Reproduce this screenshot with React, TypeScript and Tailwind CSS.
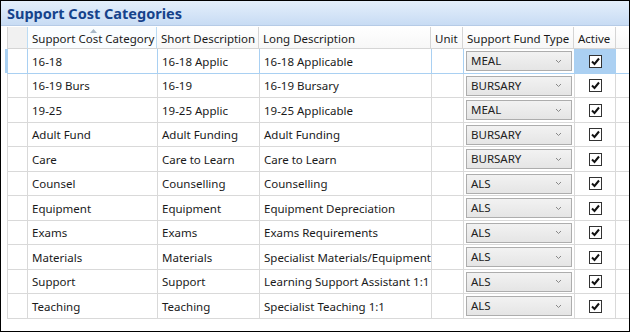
import React from 'react';

type Row = { cat: string; short: string; long: string; fund: string };

const rows: Row[] = [
  { cat: '16-18', short: '16-18 Applic', long: '16-18 Applicable', fund: 'MEAL' },
  { cat: '16-19 Burs', short: '16-19', long: '16-19 Bursary', fund: 'BURSARY' },
  { cat: '19-25', short: '19-25 Applic', long: '19-25 Applicable', fund: 'MEAL' },
  { cat: 'Adult Fund', short: 'Adult Funding', long: 'Adult Funding', fund: 'BURSARY' },
  { cat: 'Care', short: 'Care to Learn', long: 'Care to Learn', fund: 'BURSARY' },
  { cat: 'Counsel', short: 'Counselling', long: 'Counselling', fund: 'ALS' },
  { cat: 'Equipment', short: 'Equipment', long: 'Equipment Depreciation', fund: 'ALS' },
  { cat: 'Exams', short: 'Exams', long: 'Exams Requirements', fund: 'ALS' },
  { cat: 'Materials', short: 'Materials', long: 'Specialist Materials/Equipment', fund: 'ALS' },
  { cat: 'Support', short: 'Support', long: 'Learning Support Assistant 1:1', fund: 'ALS' },
  { cat: 'Teaching', short: 'Teaching', long: 'Specialist Teaching 1:1', fund: 'ALS' },
];

const font = { fontFamily: '"Noto Sans", "Open Sans", sans-serif' };

const Check = () => (
  <div className="w-[13px] h-[13px] border border-[#333] bg-white flex items-center justify-center">
    <svg width="9" height="9" viewBox="0 0 9 9">
      <path d="M1 4.5 L3.5 7 L8 1.5" fill="none" stroke="#111" strokeWidth="2" />
    </svg>
  </div>
);

const Dropdown = ({ value }: { value: string }) => (
  <div className="w-[106px] h-[20px] border border-[#adadad] bg-gradient-to-b from-[#f2f2f2] to-[#e5e5e5] flex items-center justify-between pl-[4px] pr-[9px] text-[#222]">
    <span>{value}</span>
    <svg width="7" height="5" viewBox="0 0 7 5">
      <path d="M1 1 L3.5 3.5 L6 1" fill="none" stroke="#888" strokeWidth="1" />
    </svg>
  </div>
);

const App: React.FC = () => {
  return (
    <div className="w-[630px] h-[334px] bg-white text-[11.5px] text-[#1a1a1a] whitespace-nowrap" style={font}>
      <div className="h-[332px] border border-black flex flex-col overflow-hidden">
        {/* title bar */}
        <div className="h-[25px] shrink-0 bg-gradient-to-b from-[#e4effb] to-[#c8dcf4] border-b border-[#b6cbe6] flex items-center pl-[6px] pt-[1px]">
          <span className="text-[14.5px] font-bold text-[#15428b]">Support Cost Categories</span>
        </div>

        <div className="pl-[6px] pt-[1px]">
          {/* header */}
          <div className="flex h-[22px] bg-gradient-to-b from-white to-[#f7f7f7] border-b border-[#d5d5d5]">
            <div className="w-[20px] border-l border-[#d5d5d5] bg-[#f1f1f1]" />
            <div className="relative w-[130px] border-x border-[#bcdcf4] bg-[#fafdff] flex items-center pt-[3px] pl-[4px]">
              <svg className="absolute left-[62px] top-[2px]" width="7" height="4" viewBox="0 0 7 4">
                <path d="M0 4 L3.5 0 L7 4 Z" fill="#a9b8c8" />
              </svg>
              Support Cost Category
            </div>
            <div className="w-[102px] border-r border-[#d5d5d5] flex items-center pt-[3px] pl-[4px]">Short Description</div>
            <div className="w-[172px] border-r border-[#d5d5d5] flex items-center pt-[3px] pl-[4px]">Long Description</div>
            <div className="w-[32px] border-r border-[#d5d5d5] flex items-center pt-[3px] pl-[4px]">Unit</div>
            <div className="w-[111px] border-r border-[#d5d5d5] flex items-center pt-[3px] pl-[4px]">Support Fund Type</div>
            <div className="w-[42px] border-r border-[#d5d5d5] flex items-center pt-[3px] pl-[4px]">Active</div>
            <div className="flex-1" />
          </div>

          {/* rows */}
          {rows.map((r, i) => {
            const sel = i === 0;
            const line = sel ? 'border-[#a9d0f2]' : 'border-[#d9d9d9]';
            const h = i % 2 === 0 ? 'h-[25px]' : 'h-[24px]';
            return (
              <div key={r.cat} className={`relative flex ${h} border-b ${line}`}>
                {sel && <div className="absolute left-[-2px] top-0 bottom-0 w-[2px] bg-[#a9d0f2]" />}
                <div className={`w-[20px] border-l ${line}`} />
                <div className={`w-[130px] border-l ${line} flex items-center pl-[4px] pt-[1px]`}>{r.cat}</div>
                <div className={`w-[102px] border-l ${line} flex items-center pl-[4px] pt-[1px]`}>{r.short}</div>
                <div className={`w-[172px] border-l ${line} flex items-center pl-[4px] pt-[1px] overflow-hidden`}>{r.long}</div>
                <div className={`w-[32px] border-l ${line}`} />
                <div className={`w-[111px] border-l ${line} flex items-center pl-[2px]`}>
                  <Dropdown value={r.fund} />
                </div>
                <div className={`w-[42px] border-x ${line} flex items-center justify-center ${sel ? 'bg-[#abd0f2]' : ''}`}>
                  <Check />
                </div>
                <div className="flex-1" />
              </div>
            );
          })}
        </div>
      </div>
    </div>
  );
};

export default App;
